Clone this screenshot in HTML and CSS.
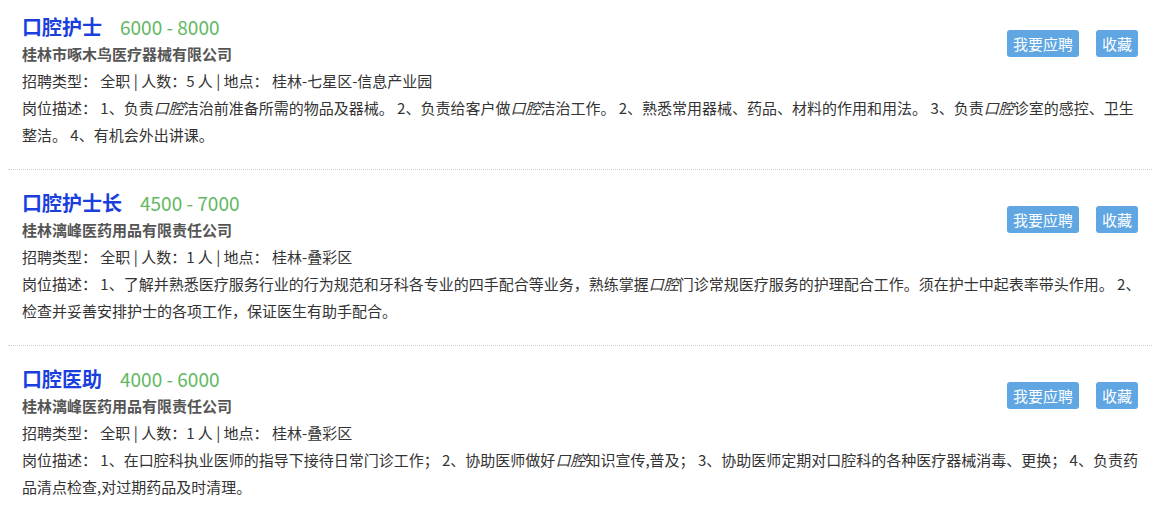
FILE: index.html
```html
<!DOCTYPE html>
<html lang="zh-CN">
  <head>
    <meta charset="utf-8"/>
    <title>招聘信息</title>
    <link rel="stylesheet" href="styles.css">
  </head>

  <body>
    <ul class="job-list">
      <li class="job">
        <div class="actions">
          <button class="btn">我要应聘</button>
          <button class="btn">收藏</button>
        </div>
        <h3 class="job-title">口腔护士<span class="salary">6000 - 8000</span></h3>
        <p class="company">桂林市啄木鸟医疗器械有限公司</p>
        <p class="info">招聘类型： 全职 | 人数：5 人 | 地点： 桂林-七星区-信息产业园</p>
        <p class="desc">岗位描述： 1、负责<em>口腔</em>洁治前准备所需的物品及器械。 2、负责给客户做<em>口腔</em>洁治工作。 2、熟悉常用器械、药品、材料的作用和用法。 3、负责<em>口腔</em>诊室的感控、卫生整洁。 4、有机会外出讲课。</p>
      </li>
      <li class="job">
        <div class="actions">
          <button class="btn">我要应聘</button>
          <button class="btn">收藏</button>
        </div>
        <h3 class="job-title">口腔护士长<span class="salary">4500 - 7000</span></h3>
        <p class="company">桂林漓峰医药用品有限责任公司</p>
        <p class="info">招聘类型： 全职 | 人数：1 人 | 地点： 桂林-叠彩区</p>
        <p class="desc">岗位描述： 1、了解并熟悉医疗服务行业的行为规范和牙科各专业的四手配合等业务，熟练掌握<em>口腔</em>门诊常规医疗服务的护理配合工作。须在护士中起表率带头作用。 2、检查并妥善安排护士的各项工作，保证医生有助手配合。</p>
      </li>
      <li class="job">
        <div class="actions">
          <button class="btn">我要应聘</button>
          <button class="btn">收藏</button>
        </div>
        <h3 class="job-title">口腔医助<span class="salary">4000 - 6000</span></h3>
        <p class="company">桂林漓峰医药用品有限责任公司</p>
        <p class="info">招聘类型： 全职 | 人数：1 人 | 地点： 桂林-叠彩区</p>
        <p class="desc">岗位描述： 1、在口腔科执业医师的指导下接待日常门诊工作； 2、协助医师做好<em>口腔</em>知识宣传,普及； 3、协助医师定期对口腔科的各种医疗器械消毒、更换； 4、负责药品清点检查,对过期药品及时清理。</p>
      </li>
    </ul>
  </body>

</html>
```

FILE: styles.css
```css
body {
  background-color: #fff;
  color: #333;
  font: 15px / 27px "Noto Sans CJK SC", "Noto Sans", sans-serif;
  margin: 8px;
}

* {
  box-sizing: border-box;
}

.job-list {
  list-style: none;
  margin: 0;
  padding: 0;
}

.job {
  padding: 20px 4px 21px 14px;
  border-bottom: 1px dotted #ccc;
}

.job:first-child {
  padding-top: 6px;
}

.job:last-child {
  border-bottom: none;
}

.actions {
  float: right;
  display: flex;
  gap: 17px;
  margin-top: 16px;
  margin-right: 10px;
  margin-left: 10px;
}

.btn {
  background-color: #5fa6e2;
  color: #fff;
  border: none;
  border-radius: 3px;
  font: 15px / 27px "Noto Sans CJK SC", sans-serif;
  padding: 0 6px;
  height: 27px;
}

.job-title {
  margin: 0;
  font-size: 20px;
  line-height: 26px;
  font-weight: bold;
  color: #1a3fdc;
}

.salary {
  font-weight: normal;
  font-size: 19px;
  color: #62b862;
  margin-left: 18px;
}

.company {
  margin: 0;
  font-weight: bold;
  color: #555;
}

.info,
.desc {
  margin: 0;
}

.desc em {
  font-style: italic;
}
```
